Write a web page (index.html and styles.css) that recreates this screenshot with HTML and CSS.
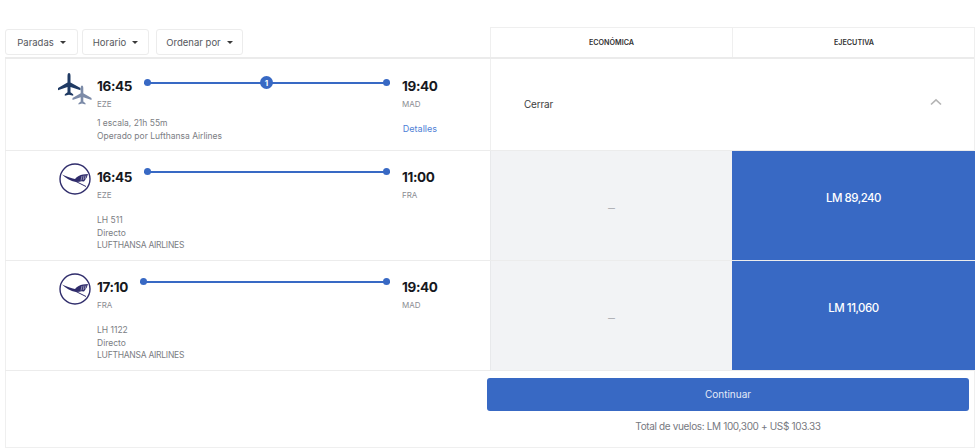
FILE: index.html
```html
<!DOCTYPE html>
<html lang="es">
<head>
<meta charset="utf-8">
<title>Vuelos</title>
<link rel="stylesheet" href="styles.css">
</head>
<body>
<main class="table">
  <div class="row head">
    <div class="filters">
      <button class="filter">Paradas<i class="caret"></i></button>
      <button class="filter">Horario<i class="caret"></i></button>
      <button class="filter">Ordenar por<i class="caret"></i></button>
    </div>
    <div class="tabs">
      <div class="tab">ECONÓMICA</div>
      <div class="tab">EJECUTIVA</div>
    </div>
  </div>

  <div class="row summary">
    <div class="flight">
      <div class="logo">
        <svg class="planes" width="36" height="36" viewBox="0 0 36 36">
          <path fill="#1f3a63" d="M11 2c1 0 1.500 1.300 1.500 3v6.400L22.500 17v2.200l-10-3.300v5.300l2.700 2v1.600L11 23.700l-4.200 1.100v-1.600l2.700-2v-5.300l-9.500 3.300V17l9.500-5.600V5c0-1.700.5-3 1.500-3z"/>
          <path fill="#7c8ba8" d="M24 14.500c.8 0 1.300 1.100 1.300 2.500v5.300l8.200 4.700v1.900l-8.200-2.700v4.400l2.200 1.600v1.300L24 32.600l-3.500.9v-1.300l2.200-1.600v-4.400l-8.200 2.700V27l8.200-4.700V17c0-1.400.5-2.500 1.300-2.500z"/>
        </svg>
      </div>
      <div class="info">
        <div class="route">
          <div class="stop"><div class="time">16:45</div><div class="code">EZE</div></div>
          <div class="track first"><span class="badge">1</span></div>
          <div class="stop"><div class="time">19:40</div><div class="code">MAD</div></div>
        </div>
        <div class="meta-row">
          <div class="meta">1 escala, 21h 55m<br>Operado por Lufthansa Airlines</div>
          <a class="details">Detalles</a>
        </div>
      </div>
    </div>
    <div class="close-cell">
      <span>Cerrar</span>
      <svg width="12" height="8" viewBox="0 0 12 8"><path d="M1 6.500 6 1.800l5 4.700" fill="none" stroke="#b4b4b4" stroke-width="1.600"/></svg>
    </div>
  </div>

  <div class="row leg">
    <div class="flight">
      <div class="logo">
        <svg class="crane" width="32" height="32" viewBox="0 0 32 32">
          <circle cx="16" cy="16" r="15" fill="none" stroke="#2f2c6b" stroke-width="1.400"/>
          <path fill="#2f2c6b" d="M3 11.500C8 13.500 12 15 16 16C18 13.500 21 12 24 11.500L29 11L27.800 14.500L25 18.500L22.500 18.200L20.500 18.800L17 19C11.500 18 6.500 15 3 11.500Z"/>
          <path fill="none" stroke="#2f2c6b" stroke-width="1" d="M17 18.500L27 23.500"/>
          <path fill="none" stroke="#fff" stroke-width=".5" d="M23 13L22 17.500M25 12.500L24.200 17M27 12.500L26 16"/>
        </svg>
      </div>
      <div class="info">
        <div class="route leg-route">
          <div class="stop"><div class="time">16:45</div><div class="code">EZE</div></div>
          <div class="track"></div>
          <div class="stop"><div class="time">11:00</div><div class="code">FRA</div></div>
        </div>
        <div class="meta leg-meta">LH 511<br>Directo<br><span class="caps">LUFTHANSA AIRLINES</span></div>
      </div>
    </div>
    <div class="fares">
      <div class="fare empty">—</div>
      <div class="fare price">LM 89,240</div>
    </div>
  </div>

  <div class="row leg">
    <div class="flight">
      <div class="logo">
        <svg class="crane" width="32" height="32" viewBox="0 0 32 32">
          <circle cx="16" cy="16" r="15" fill="none" stroke="#2f2c6b" stroke-width="1.400"/>
          <path fill="#2f2c6b" d="M3 11.500C8 13.500 12 15 16 16C18 13.500 21 12 24 11.500L29 11L27.800 14.500L25 18.500L22.500 18.200L20.500 18.800L17 19C11.500 18 6.500 15 3 11.500Z"/>
          <path fill="none" stroke="#2f2c6b" stroke-width="1" d="M17 18.500L27 23.500"/>
          <path fill="none" stroke="#fff" stroke-width=".5" d="M23 13L22 17.500M25 12.500L24.200 17M27 12.500L26 16"/>
        </svg>
      </div>
      <div class="info">
        <div class="route leg-route">
          <div class="stop"><div class="time">17:10</div><div class="code">FRA</div></div>
          <div class="track"></div>
          <div class="stop"><div class="time">19:40</div><div class="code">MAD</div></div>
        </div>
        <div class="meta leg-meta">LH 1122<br>Directo<br><span class="caps">LUFTHANSA AIRLINES</span></div>
      </div>
    </div>
    <div class="fares">
      <div class="fare empty">—</div>
      <div class="fare price">LM 11,060</div>
    </div>
  </div>

  <div class="row foot">
    <div class="foot-space"></div>
    <div class="foot-main">
      <button class="continue">Continuar</button>
      <p class="total">Total de vuelos: LM 100,300 + US$ 103.33</p>
    </div>
  </div>
</main>
</body>
</html>
```
FILE: styles.css
```css
* { box-sizing: border-box; }
html, body { margin: 0; background: #fff; }
body {
  padding: 27px 4px 0 5px;
  height: 448px;
  overflow: hidden;
  font-family: Inter, "Liberation Sans", sans-serif;
  color: #6d6f76;
}
.table { width: 970px; border-right: 1px solid #efefef; border-bottom: 1px solid #efefef; }
.row { display: grid; grid-template-columns: 485px 485px; }

.head { height: 32px; border-bottom: 2px solid #ebebeb; }
.filters { display: flex; gap: 4px; padding-top: 2px; align-items: flex-start; }
.filter {
  display: flex; align-items: center; justify-content: center; gap: 6px;
  height: 26px; padding: 0; background: #fff;
  border: 1px solid #ececec; border-radius: 3px;
  font: 400 9.500px Inter, sans-serif; color: #55575c;
}
.filter:nth-child(1) { width: 73px; }
.filter:nth-child(2) { width: 67px; margin-right: 3px; }
.filter:nth-child(3) { width: 87px; }
.caret { width: 0; height: 0; border: 3px solid transparent; border-top: 3px solid #3a3a3a; border-bottom: 0; }
.tabs { display: grid; grid-template-columns: 241px 243px; border-top: 1px solid #efefef; border-left: 1px solid #efefef; }
.tab {
  display: flex; align-items: center; justify-content: center;
  font: 600 7.200px Inter, sans-serif; color: #333;
}
.tab + .tab { border-left: 1px solid #efefef; }

.flight { display: flex; border-left: 1px solid #efefef; }
.logo { width: 91px; flex: none; display: flex; justify-content: flex-end; }
.planes { margin-top: 12px; margin-right: 3px; }
.crane { margin-top: 12px; margin-right: 6px; }
.info { width: 340px; flex: none; }
.route { display: flex; padding-top: 17px; }
.leg-route { padding-top: 16px; }
.time { font: 700 13.500px/20px Inter, sans-serif; color: #16181d; letter-spacing: -.35px; }
.code { font: 400 8px/12px Inter, sans-serif; color: #8a8c92; margin-top: 2px; }
.stop:last-child { width: 35px; }
.track {
  flex: 1; height: 1.500px; margin: 6px 12px 0; background: #3869c4; position: relative;
  display: flex; justify-content: center; align-items: center;
}
.leg-route .track { margin-top: 4px; }
.track::before, .track::after {
  content: ""; position: absolute; top: -2.750px; width: 7px; height: 7px; border-radius: 50%; background: #3869c4;
}
.track::before { left: 0; }
.track::after { right: 0; }
.badge {
  width: 13px; height: 13px; border-radius: 50%; background: #3869c4; color: #fff;
  display: flex; align-items: center; justify-content: center; flex: none;
  font: 700 8px Inter, sans-serif; margin-left: -1px;
}
.meta { font: 400 8.500px/12.500px Inter, sans-serif; color: #7b7d83; }
.caps { letter-spacing: -.25px; }
.meta-row { display: flex; justify-content: space-between; align-items: flex-start; margin-top: 7px; }
.details { font: 400 9px/12.500px Inter, sans-serif; color: #4f7fd6; margin-top: 6px; }
.leg-meta { margin-top: 13px; }

.summary { height: 92px; border-bottom: 1px solid #ececec; }
.close-cell {
  display: flex; align-items: center; justify-content: space-between;
  padding: 0 33px 2px 33px; border-left: 1px solid #efefef;
  font: 400 10px Inter, sans-serif; letter-spacing: -.2px; color: #3c3d40;
}
.close-cell svg { margin-bottom: 3px; }

.leg { height: 110px; border-bottom: 1px solid #ececec; }
.fares { display: grid; grid-template-columns: 242px 243px; }
.fare { display: flex; align-items: center; justify-content: center; }
.empty { background: #f2f3f5; border-left: 1px solid #e8e9eb; color: #8a8c92; font: 400 7px Inter, sans-serif; padding-top: 5px; }
.price { background: #3869c4; color: #fff; font: 500 11.500px Inter, sans-serif; letter-spacing: -.5px; padding-bottom: 15px; }

.foot { height: 76px; border-left: 1px solid #efefef; }
.foot-main { margin-left: -4px; width: 482px; padding-top: 7px; display: flex; flex-direction: column; align-items: center; }
.continue {
  width: 482px; height: 33px; border: 0; border-radius: 3px; padding: 0 0 1px; background: #3869c4; color: #e4ebf8;
  font: 400 10px Inter, sans-serif;
}
.total { margin: 8px 0 0; font: 400 10px/14px Inter, sans-serif; letter-spacing: -.35px; color: #77797f; }
```
